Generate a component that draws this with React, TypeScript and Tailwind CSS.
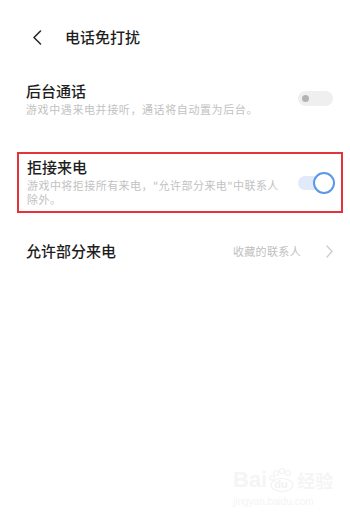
import React from "react";

const font = { fontFamily: '"Noto Sans CJK SC", "Noto Sans", sans-serif' };

export default function App() {
  return (
    <div
      className="relative w-full h-[520px] bg-white overflow-hidden flex flex-col"
      style={font}
    >
      {/* header */}
      <div className="mt-[25px] h-[24px] flex items-center">
        <svg
          className="ml-[32px]"
          width="10"
          height="15"
          viewBox="0 0 10 15"
          fill="none"
        >
          <polyline
            points="8.5,1 2,7.5 8.5,14"
            stroke="#2a2a2a"
            strokeWidth="1.6"
            strokeLinecap="round"
            strokeLinejoin="round"
          />
        </svg>
        <span className="ml-[23px] text-[15px] leading-[24px] font-medium text-[#1f1f1f]">
          电话免打扰
        </span>
      </div>

      {/* row 1 */}
      <div className="mt-[31px] flex items-center justify-between pl-[26px] pr-[17px]">
        <div className="flex flex-col">
          <span className="text-[15px] leading-[22px] font-medium text-[#1e1e1e]">
            后台通话
          </span>
          <span className="text-[11px] leading-[14px] tracking-[0.6px] text-[#c2c2c2]">
            游戏中遇来电并接听，通话将自动置为后台。
          </span>
        </div>
        <div className="w-[35px] h-[15px] rounded-full bg-[#efefef] flex items-center pl-[2px]">
          <div className="w-[7px] h-[7px] rounded-full bg-[#b3b3b3] ml-[1.5px]" />
        </div>
      </div>

      {/* row 2 highlighted */}
      <div className="mt-[36px] ml-[17px] mr-[7px] h-[61px] border-2 border-[#e5333a] pl-[8px] pr-[6px] pt-[1.5px] flex items-center justify-between">
        <div className="flex flex-col self-start">
          <span className="text-[15px] leading-[22px] font-medium text-[#1e1e1e]">
            拒接来电
          </span>
          <span className="block text-[11px] leading-[14px] tracking-[0.45px] text-[#c2c2c2]">
            游戏中将拒接所有来电，"允许部分来电"中联系人
          </span>
          <span className="block text-[11px] leading-[14px] tracking-[0.45px] text-[#c2c2c2]">
            除外。
          </span>
        </div>
        <div className="relative w-[37px] h-[22px] flex items-center">
          <div className="absolute left-0 top-[4px] w-[32px] h-[14px] rounded-full bg-[#e0eafa]" />
          <div className="absolute right-0 top-0 w-[22px] h-[22px] rounded-full bg-white border-[2.5px] border-[#5b98e8]" />
        </div>
      </div>

      {/* row 3 */}
      <div className="mt-[27px] flex items-center justify-between pl-[26px] pr-[17px]">
        <span className="text-[15px] leading-[22px] font-medium text-[#1e1e1e]">
          允许部分来电
        </span>
        <div className="flex items-center">
          <span className="text-[11px] leading-[14px] tracking-[0.35px] text-[#c0c0c0]">
            收藏的联系人
          </span>
          <svg
            className="ml-[25px]"
            width="7"
            height="13"
            viewBox="0 0 7 13"
            fill="none"
          >
            <polyline
              points="1,1 6,6.5 1,12"
              stroke="#cacaca"
              strokeWidth="1.2"
              strokeLinecap="round"
              strokeLinejoin="round"
            />
          </svg>
        </div>
      </div>

      {/* watermark */}
      <div className="absolute left-[233px] top-[468px] flex flex-col items-start select-none">
        <div className="flex items-end">
          <span
            className="text-[22px] leading-[24px] font-bold text-[#f5f5f5]"
            style={{ fontFamily: '"Liberation Sans", sans-serif' }}
          >
            Bai
          </span>
          <div className="relative ml-[2px] w-[26px] h-[24px]">
            <svg width="26" height="24" viewBox="0 0 26 24" className="absolute inset-0">
              <circle cx="7" cy="5" r="2.5" fill="none" stroke="#f3f3f3" strokeWidth="1.2" />
              <circle cx="13" cy="3" r="2.5" fill="none" stroke="#f3f3f3" strokeWidth="1.2" />
              <circle cx="19" cy="5" r="2.5" fill="none" stroke="#f3f3f3" strokeWidth="1.2" />
              <circle cx="3" cy="10" r="2.2" fill="none" stroke="#f3f3f3" strokeWidth="1.2" />
              <ellipse cx="13" cy="17" rx="11" ry="6.5" fill="none" stroke="#f3f3f3" strokeWidth="1.2" />
            </svg>
            <span
              className="absolute left-[5px] top-[10px] text-[11px] leading-[12px] font-bold text-[#f2f2f2]"
              style={{ fontFamily: '"Liberation Sans", sans-serif' }}
            >
              du
            </span>
          </div>
          <span className="ml-[2px] text-[18px] leading-[24px] font-bold text-[#f5f5f5]">
            经验
          </span>
        </div>
        <span
          className="mt-[4px] text-[10px] leading-[12px] text-[#f4f4f4]"
          style={{ fontFamily: '"Liberation Sans", sans-serif' }}
        >
          jingyan.baidu.com
        </span>
      </div>
    </div>
  );
}
